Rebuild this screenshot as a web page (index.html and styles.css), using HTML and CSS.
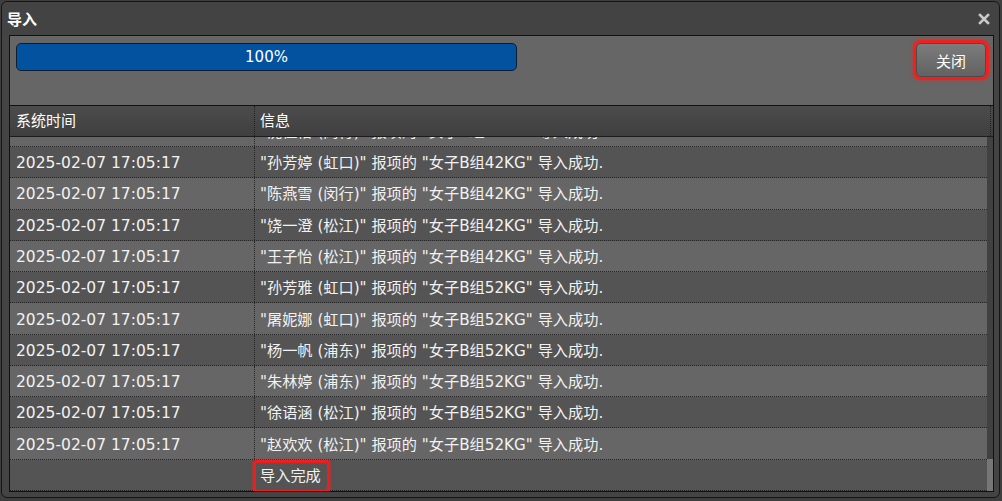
FILE: index.html
```html
<!DOCTYPE html>
<html lang="zh">
<head>
<meta charset="utf-8">
<title>导入</title>
<link rel="stylesheet" href="styles.css">
</head>
<body>
<div class="dialog">
  <div class="titlebar">
    <span class="title">导入</span>
    <svg class="close-x" width="12" height="12" viewBox="0 0 12 12" aria-hidden="true">
      <path d="M2 2 L10 10 M10 2 L2 10" stroke="#c9c9c9" stroke-width="2.6" stroke-linecap="square" fill="none"/>
    </svg>
  </div>
  <div class="panel">
    <div class="toolbar">
      <div class="progress">100%</div>
      <button class="btn-close">关闭</button>
    </div>
    <div class="grid">
      <div class="grid-head">
        <div class="hc c1">系统时间</div>
        <div class="hc c2">信息</div>
      </div>
      <div class="grid-body">
        <div class="rows">
          <div class="row"><div class="cell c1">2025-02-07 17:05:17</div><div class="cell c2">"沈佳怡 (闵行)" 报项的 "女子B组42KG" 导入成功.</div></div>
          <div class="row"><div class="cell c1">2025-02-07 17:05:17</div><div class="cell c2">"孙芳婷 (虹口)" 报项的 "女子B组42KG" 导入成功.</div></div>
          <div class="row"><div class="cell c1">2025-02-07 17:05:17</div><div class="cell c2">"陈燕雪 (闵行)" 报项的 "女子B组42KG" 导入成功.</div></div>
          <div class="row"><div class="cell c1">2025-02-07 17:05:17</div><div class="cell c2">"饶一澄 (松江)" 报项的 "女子B组42KG" 导入成功.</div></div>
          <div class="row"><div class="cell c1">2025-02-07 17:05:17</div><div class="cell c2">"王子怡 (松江)" 报项的 "女子B组42KG" 导入成功.</div></div>
          <div class="row"><div class="cell c1">2025-02-07 17:05:17</div><div class="cell c2">"孙芳雅 (虹口)" 报项的 "女子B组52KG" 导入成功.</div></div>
          <div class="row"><div class="cell c1">2025-02-07 17:05:17</div><div class="cell c2">"屠妮娜 (虹口)" 报项的 "女子B组52KG" 导入成功.</div></div>
          <div class="row"><div class="cell c1">2025-02-07 17:05:17</div><div class="cell c2">"杨一帆 (浦东)" 报项的 "女子B组52KG" 导入成功.</div></div>
          <div class="row"><div class="cell c1">2025-02-07 17:05:17</div><div class="cell c2">"朱林婷 (浦东)" 报项的 "女子B组52KG" 导入成功.</div></div>
          <div class="row"><div class="cell c1">2025-02-07 17:05:17</div><div class="cell c2">"徐语涵 (松江)" 报项的 "女子B组52KG" 导入成功.</div></div>
          <div class="row"><div class="cell c1">2025-02-07 17:05:17</div><div class="cell c2">"赵欢欢 (松江)" 报项的 "女子B组52KG" 导入成功.</div></div>
          <div class="row"><div class="cell c1"></div><div class="cell c2">导入完成<span class="mark"></span></div></div>
        </div>
        <div class="scrollbar"><div class="thumb"></div></div>
      </div>
    </div>
  </div>
</div>
</body>
</html>
```

FILE: styles.css
```css
html, body {
  margin: 0;
  padding: 0;
}
body {
  width: 1002px;
  height: 501px;
  padding: 1px;
  box-sizing: border-box;
  background: #3e3e3e;
  overflow: hidden;
  font-family: "DejaVu Sans", "Noto Sans CJK SC", sans-serif;
  font-size: 15px;
  color: #f2f2f2;
}
.dialog {
  width: 999px;
  height: 497px;
  box-sizing: border-box;
  border: 1px solid #161616;
  border-radius: 6px;
  background: #444;
  display: flex;
  flex-direction: column;
}
.titlebar {
  height: 33px;
  flex: none;
  display: flex;
  align-items: center;
  justify-content: space-between;
  padding: 0 9px 0 5px;
  background: #434343;
  border-radius: 6px 6px 0 0;
}
.title {
  font-family: "Noto Sans CJK SC", sans-serif;
  font-weight: bold;
  font-size: 15px;
  color: #fff;
}
.close-x {
  display: block;
}
.panel {
  flex: 1;
  margin: 0 5px 5px 7px;
  border: 1px solid #111;
  background: #666;
  display: flex;
  flex-direction: column;
  min-height: 0;
}
.toolbar {
  height: 69px;
  flex: none;
  display: flex;
  justify-content: space-between;
  align-items: flex-start;
  padding: 0 7px 0 6px;
}
.progress {
  margin-top: 7px;
  width: 501px;
  height: 28px;
  box-sizing: border-box;
  border: 1px solid #0c1d33;
  border-radius: 5px;
  background: #02529f;
  color: #fff;
  text-align: center;
  line-height: 26px;
  font-size: 15px;
}
.btn-close {
  margin-top: 7px;
  width: 70px;
  height: 34px;
  box-sizing: border-box;
  border: 1px solid #4c4c4c;
  border-radius: 5px;
  background: linear-gradient(#7c7c7c, #626262);
  color: #fff;
  font-family: "Noto Sans CJK SC", sans-serif;
  font-size: 15px;
  padding: 0;
  box-shadow: 0 0 0 3px #f02020, 0 0 3px 4px rgba(255, 30, 30, 0.45);
}
.grid {
  flex: 1;
  display: flex;
  flex-direction: column;
  min-height: 0;
}
.grid-head {
  flex: none;
  height: 32px;
  box-sizing: border-box;
  display: flex;
  border-top: 1px solid #111;
  border-bottom: 1px solid #1c1c1c;
  background: linear-gradient(#4c4c4c, #3f3f3f);
}
.hc {
  display: flex;
  align-items: center;
  box-sizing: border-box;
  color: #fff;
  font-size: 15px;
  padding-bottom: 3px;
}
.hc.c1 {
  width: 245px;
  padding-left: 6px;
  border-right: 1px dotted #222;
}
.hc.c2 {
  width: 736px;
  padding-left: 5px;
  border-right: 1px dotted #222;
}
.grid-body {
  flex: 1;
  display: flex;
  min-height: 0;
}
.rows {
  flex: 1;
  display: flex;
  flex-direction: column;
  justify-content: flex-end;
  overflow: hidden;
}
.row {
  flex: none;
  height: 31.27px;
  box-sizing: border-box;
  display: flex;
  border-bottom: 1px dotted #252525;
}
.row:nth-child(odd) {
  background: #666;
}
.row:nth-child(even) {
  background: #545454;
}
.cell {
  display: flex;
  align-items: center;
  box-sizing: border-box;
  white-space: nowrap;
  color: #f2f2f2;
  line-height: 20px;
  padding-top: 2px;
}
.cell.c1 {
  width: 245px;
  flex: none;
  padding-left: 6px;
  font-size: 15.5px;
  border-right: 1px dotted #252525;
}
.cell.c2 {
  flex: 1;
  padding-left: 5px;
  font-size: 15.2px;
  position: relative;
}
.mark {
  position: absolute;
  left: -2px;
  top: 0;
  width: 77px;
  height: 33px;
  box-sizing: border-box;
  border: 3px solid #ee1e1e;
  border-radius: 3px;
  box-shadow: 0 0 2px 1px rgba(255, 30, 30, 0.4);
}
.scrollbar {
  width: 6px;
  flex: none;
  background: #414141;
  display: flex;
  flex-direction: column;
  justify-content: flex-end;
}
.thumb {
  height: 32px;
  background: #777;
}
```
